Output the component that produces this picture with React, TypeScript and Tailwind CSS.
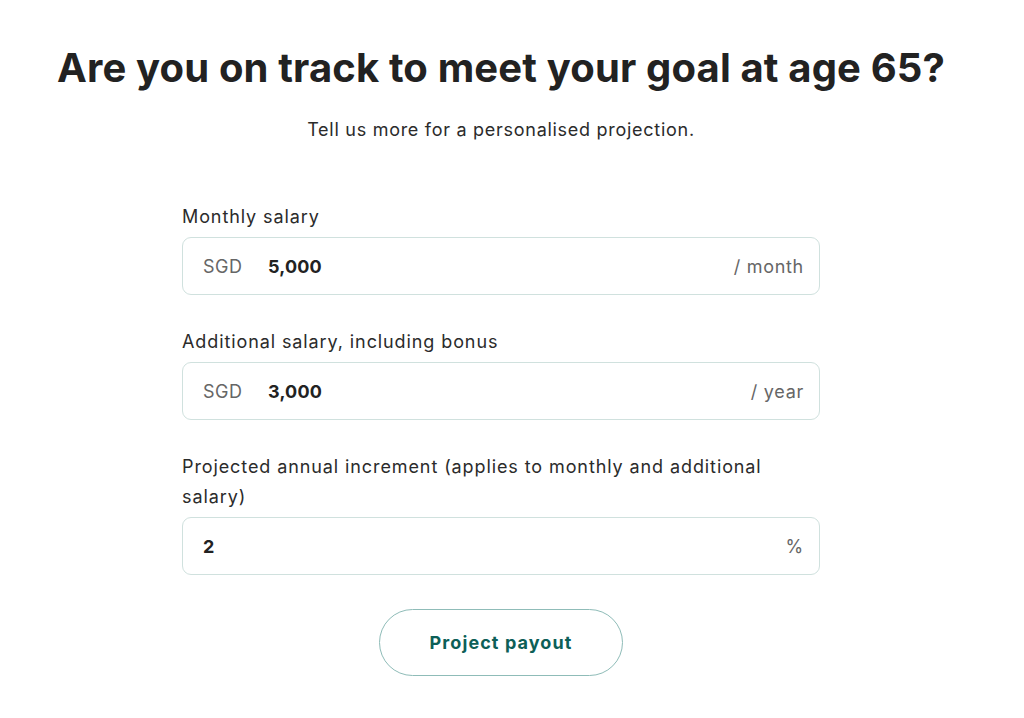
import React from "react";

const font = { fontFamily: "Inter, 'Noto Sans', sans-serif" };

function Field({
  label,
  prefix,
  value,
  suffix,
}: {
  label: React.ReactNode;
  prefix?: string;
  value: string;
  suffix: string;
}) {
  return (
    <div className="flex flex-col">
      <label className="text-[18px] leading-[30px] tracking-[0.05em] text-[#2b2b2b]">{label}</label>
      <div className="mt-[5px] flex h-[58px] items-center rounded-[9px] border border-[#d0e1de] pl-[20px] pr-[15px]">
        {prefix && <span className="w-[65px] text-[18px] tracking-[0.03em] text-[#666]">{prefix}</span>}
        <span className="text-[18px] font-bold tracking-[0.01em] text-[#222]">{value}</span>
        <span className="ml-auto text-[18px] tracking-[0.04em] text-[#666]">{suffix}</span>
      </div>
    </div>
  );
}

export default function App() {
  return (
    <div className="min-h-[718px] w-[1002px] bg-white" style={font}>
      <div className="flex flex-col items-center pt-[40px]">
        <h1 className="text-[40px] font-bold leading-[56px] tracking-[0.15px] text-[#222]">
          Are you on track to meet your goal at age 65?
        </h1>
        <p className="mt-[20px] text-[18px] leading-[28px] tracking-[0.04em] text-[#2b2b2b]">
          Tell us more for a personalised projection.
        </p>
        <div className="mt-[58px] flex w-[638px] flex-col gap-[32px]">
          <Field label="Monthly salary" prefix="SGD" value="5,000" suffix="/ month" />
          <Field label="Additional salary, including bonus" prefix="SGD" value="3,000" suffix="/ year" />
          <Field
            label="Projected annual increment (applies to monthly and additional salary)"
            value="2"
            suffix="%"
          />
        </div>
        <button className="mt-[34px] h-[67px] w-[244px] rounded-full border border-[#8fbcb8] text-[18px] font-bold tracking-[0.06em] text-[#0d5f58]">
          Project payout
        </button>
      </div>
    </div>
  );
}
